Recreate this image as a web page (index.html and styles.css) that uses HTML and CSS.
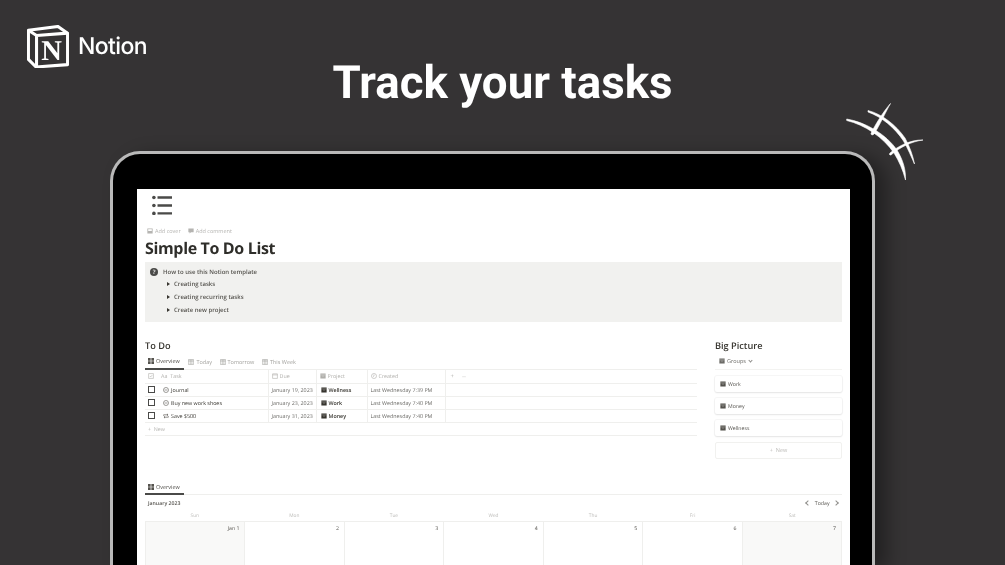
FILE: index.html
```html
<!DOCTYPE html>
<html>
<head>
    <title>Track your tasks</title>
    <link rel="stylesheet" href="styles.css">
</head>
<body>
    <svg class="sprite" width="0" height="0">
        <symbol id="i-grid" viewBox="0 0 10 10"><path d="M0 0h4.400v4.400H0zM5.600 0H10v4.400H5.600zM0 5.600h4.400V10H0zM5.600 5.600H10V10H5.600z" fill="currentColor"/></symbol>
        <symbol id="i-table" viewBox="0 0 10 10"><path d="M.5 1h9v8h-9zM3.700 1v8M6.500 1v8M.5 3.400h9" fill="none" stroke="currentColor"/></symbol>
        <symbol id="i-box" viewBox="0 0 10 10"><path d="M.6.8h8.800v8.400H.6z" fill="currentColor"/><path d="M.6 3.200h8.800M3.500 5.200h3" stroke="#fff" stroke-width=".7" stroke-opacity=".7"/></symbol>
        <symbol id="i-image" viewBox="0 0 10 10"><path d="M.6.8h8.800v8.400H.6z" fill="currentColor"/><path d="M2 2h6v3H2z" fill="#fff"/></symbol>
        <symbol id="i-comment" viewBox="0 0 10 10"><path d="M.6 1h8.800v6H5L2.600 9.200V7H.6z" fill="currentColor"/></symbol>
        <symbol id="i-cal" viewBox="0 0 10 10"><path d="M1 1.400h8v7.600H1zM1 3.200h8" fill="none" stroke="currentColor"/></symbol>
        <symbol id="i-clock" viewBox="0 0 10 10"><circle cx="5" cy="5" r="4.200" fill="none" stroke="currentColor"/><path d="M5 2.600V5L3.400 6.200" fill="none" stroke="currentColor"/></symbol>
        <symbol id="i-minus" viewBox="0 0 10 10"><circle cx="5" cy="5" r="4.200" fill="none" stroke="currentColor" stroke-width=".8"/><path d="M2.600 5h4.800" stroke="currentColor" stroke-width=".8"/></symbol>
        <symbol id="i-repeat" viewBox="0 0 10 10"><path d="M1 4.600V3h7M6.600 1.400 8.400 3 6.600 4.600M9 5.400V7H2M3.400 5.400 1.600 7l1.800 1.600" fill="none" stroke="currentColor" stroke-width=".9"/></symbol>
        <symbol id="i-check" viewBox="0 0 10 10"><path d="M1 1h8v8H1z" fill="none" stroke="currentColor"/><path d="M3 5l1.500 1.500L7 3.600" fill="none" stroke="currentColor"/></symbol>
    </svg>

    <header class="brand">
        <svg class="brand-logo" viewBox="0 0 44 45">
            <path d="M1.500 5.500 32.500 1.500 42.500 8.500V41.500L9.500 44 1.500 36z" fill="#353334" stroke="#fff" stroke-width="3.200" stroke-linejoin="round"/>
            <path d="M1.500 5.500 10 11V44M10 11 42.500 8.500" fill="none" stroke="#fff" stroke-width="3.200" stroke-linejoin="round"/>
            <text class="brand-n" x="25.700" y="36.700" text-anchor="middle">N</text>
        </svg>
        <span class="brand-name">Notion</span>
    </header>

    <svg class="scribble" viewBox="0 0 130 110">
        <path d="M26.700 29C45 32 66 44 77 60c6 10 9 20 8.500 30-2.500-10-6.500-19-11.500-27C63 47 45 35 26.700 30.500z"/>
        <path d="M48 20.500C62 24 76 35 85 48c5 9 8 18 9.500 26-3.500-8-6.500-15-11-23C75 38 62 27 48 22z"/>
        <path d="M70.500 13.500C66 21 60 35 54 44c-1.500 1.500-3 1-3-.5C55 35 63 22 70.500 13.500z"/>
        <path d="M103 50C92 51.500 80 57 71 65c-1.500.5-2-1-1-2C78 56 91 49.500 103 50z"/>
    </svg>

    <h1 class="headline">Track your tasks</h1>

    <div class="tablet">
        <main class="screen">
            <svg class="page-icon" viewBox="0 0 20 20">
                <circle cx="1.900" cy="2.500" r="1.800" fill="#4a4a48"/>
                <circle cx="1.900" cy="10.500" r="1.800" fill="#4a4a48"/>
                <circle cx="1.900" cy="18.400" r="1.800" fill="#4a4a48"/>
                <path d="M5.500 1.300H20v2.400H5.500zM5.500 9.300H20v2.400H5.500zM5.500 17.200H20v2.400H5.500z" fill="#4a4a48"/>
            </svg>
            <div class="page-actions">
                <span class="action"><svg class="ico"><use href="#i-image"/></svg>Add cover</span>
                <span class="action"><svg class="ico"><use href="#i-comment"/></svg>Add comment</span>
            </div>
            <h2 class="page-title">Simple To Do List</h2>

            <section class="callout">
                <div class="callout-head"><span class="help">?</span>How to use this Notion template</div>
                <div class="toggle"><span class="caret"></span>Creating tasks</div>
                <div class="toggle"><span class="caret"></span>Creating recurring tasks</div>
                <div class="toggle"><span class="caret"></span>Create new project</div>
            </section>

            <div class="columns">
                <section class="todo">
                    <h3 class="section-title">To Do</h3>
                    <nav class="tabs">
                        <span class="tab active"><svg class="ico"><use href="#i-grid"/></svg>Overview</span>
                        <span class="tab"><svg class="ico"><use href="#i-table"/></svg>Today</span>
                        <span class="tab"><svg class="ico"><use href="#i-table"/></svg>Tomorrow</span>
                        <span class="tab"><svg class="ico"><use href="#i-table"/></svg>This Week</span>
                    </nav>
                    <table class="tasks">
                        <colgroup>
                            <col class="c-check"><col class="c-task"><col class="c-due"><col class="c-project"><col class="c-created"><col>
                        </colgroup>
                        <tr class="head">
                            <td class="check"><svg class="ico"><use href="#i-check"/></svg></td>
                            <td class="task-name"><span class="aa">Aa</span>Task</td>
                            <td class="line"><svg class="ico"><use href="#i-cal"/></svg>Due</td>
                            <td class="line"><svg class="ico"><use href="#i-box"/></svg>Project</td>
                            <td class="line"><svg class="ico"><use href="#i-clock"/></svg>Created</td>
                            <td class="line add-col"><span>+</span><span>—</span></td>
                        </tr>
                        <tr>
                            <td class="check"><span class="box"></span></td>
                            <td class="task-name"><svg class="ico"><use href="#i-minus"/></svg>Journal</td>
                            <td class="line date">January 19, 2023</td>
                            <td class="line proj"><svg class="ico"><use href="#i-box"/></svg>Wellness</td>
                            <td class="line date">Last Wednesday 7:39 PM</td>
                            <td class="line"></td>
                        </tr>
                        <tr>
                            <td class="check"><span class="box"></span></td>
                            <td class="task-name"><svg class="ico"><use href="#i-minus"/></svg>Buy new work shoes</td>
                            <td class="line date">January 23, 2023</td>
                            <td class="line proj"><svg class="ico"><use href="#i-box"/></svg>Work</td>
                            <td class="line date">Last Wednesday 7:40 PM</td>
                            <td class="line"></td>
                        </tr>
                        <tr>
                            <td class="check"><span class="box"></span></td>
                            <td class="task-name"><svg class="ico"><use href="#i-repeat"/></svg>Save $500</td>
                            <td class="line date">January 31, 2023</td>
                            <td class="line proj"><svg class="ico"><use href="#i-box"/></svg>Money</td>
                            <td class="line date">Last Wednesday 7:40 PM</td>
                            <td class="line"></td>
                        </tr>
                        <tr class="new">
                            <td colspan="6">+&nbsp; New</td>
                        </tr>
                    </table>
                </section>

                <aside class="big-picture">
                    <h3 class="section-title">Big Picture</h3>
                    <div class="groups"><svg class="ico"><use href="#i-box"/></svg>Groups <span class="chev"></span></div>
                    <div class="card"><svg class="ico"><use href="#i-box"/></svg>Work</div>
                    <div class="card"><svg class="ico"><use href="#i-box"/></svg>Money</div>
                    <div class="card"><svg class="ico"><use href="#i-box"/></svg>Wellness</div>
                    <div class="card-new">+&nbsp; New</div>
                </aside>
            </div>

            <section class="calendar">
                <nav class="tabs cal-tabs">
                    <span class="tab active"><svg class="ico"><use href="#i-grid"/></svg>Overview</span>
                </nav>
                <div class="cal-bar">
                    <span class="month">January 2023</span>
                    <span class="cal-nav"><span class="arrow left"></span>Today<span class="arrow right"></span></span>
                </div>
                <div class="cal-days">
                    <span>Sun</span><span>Mon</span><span>Tue</span><span>Wed</span><span>Thu</span><span>Fri</span><span>Sat</span>
                </div>
                <div class="cal-grid">
                    <div class="cell weekend">Jan 1</div>
                    <div class="cell">2</div>
                    <div class="cell">3</div>
                    <div class="cell">4</div>
                    <div class="cell">5</div>
                    <div class="cell">6</div>
                    <div class="cell weekend">7</div>
                </div>
            </section>
        </main>
    </div>
</body>
</html>
```

FILE: styles.css
```css
html, body { margin: 0; height: 100%; overflow: hidden; }
body { background: #353334; font-family: "Open Sans", "Noto Sans", sans-serif; color: #37352f; text-rendering: geometricPrecision; }
.sprite { position: absolute; }

.brand { position: absolute; left: 27px; top: 25px; display: flex; align-items: center; gap: 9px; color: #fff; filter: blur(.3px); }
.brand-logo { width: 42px; height: 43px; }
.brand-n { font-family: "Liberation Serif", serif; font-weight: 700; font-size: 30px; fill: #fff; }
.brand-name { font-family: "Inter", sans-serif; font-size: 23px; font-weight: 500; letter-spacing: -0.6px; margin-top: -1px; }
.scribble { position: absolute; left: 820px; top: 90px; width: 130px; height: 110px; }
.scribble path { fill: #fff; stroke: #fff; stroke-width: .6; }

.headline { margin: 0; padding-top: 57px; height: 95px; text-align: center; color: #fff; font-family: Roboto, sans-serif; font-size: 45.7px; line-height: 54px; font-weight: 700; box-sizing: border-box; filter: blur(.25px); }

.tablet { box-sizing: border-box; margin: 56px 0 0 110px; width: 765px; height: 414px; background: #000; border: 3px solid #b9b9b9; border-bottom: 0; border-radius: 30px 30px 0 0; padding: 35px 22px 0 24px; box-shadow: 12px 4px 18px rgba(0,0,0,.35); }
.screen { background: #fff; height: 376px; padding: 0 8px; overflow: hidden; filter: blur(.35px); }

.ico { width: 6px; height: 6px; margin-right: 2px; vertical-align: -1px; flex: none; }
.page-icon { display: block; width: 20px; height: 20px; margin-left: 7px; padding-top: 6px; }
.page-actions { display: flex; gap: 7px; margin-top: 12px; padding-left: 2px; height: 9px; font-size: 5.5px; line-height: 9px; color: #b5b4b1; }
.page-title { margin: 1px 0 0; font-size: 16px; line-height: 22px; height: 22px; font-weight: 700; letter-spacing: -0.35px; color: #2f2e2a; }

.callout { margin-top: 3px; height: 60px; box-sizing: border-box; padding-top: 5px; background: #f1f1ef; font-size: 6px; font-weight: 600; color: #55534e; }
.callout-head { display: flex; align-items: center; height: 10px; padding-left: 5px; }
.help { width: 8px; height: 8px; border-radius: 50%; background: #4a4a48; color: #fff; font-size: 6px; line-height: 8px; text-align: center; margin-right: 5px; }
.toggle { display: flex; align-items: center; height: 13px; padding-left: 22px; }
.caret { width: 0; height: 0; border-left: 3px solid #37352f; border-top: 2px solid transparent; border-bottom: 2px solid transparent; margin-right: 4px; }

.columns { display: flex; margin-top: 17px; height: 135px; }
.todo { width: 552px; }
.big-picture { width: 127px; margin-left: 18px; }
.section-title { margin: 0; font-size: 9.2px; line-height: 14px; font-weight: 600; color: #37352f; }

.tabs { display: flex; gap: 1.6px; height: 17px; font-size: 5.5px; color: #a3a29e; border-bottom: 1px solid #efefed; box-sizing: border-box; }
.tab { display: flex; align-items: center; padding: 0 3px; height: 17px; box-sizing: border-box; }
.tab.active { color: #55534e; border-bottom: 2px solid #4a4a48; padding-right: 4px; }
.tab .ico { margin-right: 2px; }

.tasks { border-collapse: collapse; table-layout: fixed; width: 100%; font-size: 5.35px; }
.c-check { width: 13px; }
.c-task { width: 110px; }
.c-due { width: 48px; }
.c-project { width: 51px; }
.c-created { width: 78px; }
.tasks td { height: 13px; padding: 0 3px; border-bottom: 1px solid #efefed; box-sizing: border-box; white-space: nowrap; overflow: hidden; color: #6d6c68; }
.tasks .head td { color: #b0afab; }
.tasks .line { border-left: 1px solid #efefed; }
.tasks .check { padding: 0 0 0 3px; }
.tasks .task-name { padding-left: 5px; color: #37352f; font-weight: 500; }
.tasks .head .task-name { padding-left: 3px; font-weight: 400; color: #b0afab; }
.tasks .proj { color: #37352f; font-weight: 600; padding-left: 4px; }
.aa { margin-right: 3px; }
.box { display: block; width: 5px; height: 5px; border: 1px solid #4a4a48; }
.tasks .add-col { font-size: 6px; }
.add-col span { margin-left: 2px; margin-right: 8px; }
.add-col span + span { font-size: 4px; margin-left: 0; }
.tasks .new td { color: #b5b4b1; padding-left: 3px; }

.groups { display: flex; align-items: center; height: 17px; padding-left: 4px; font-size: 5.5px; color: #6d6c68; border-bottom: 1px solid #f3f3f1; box-sizing: border-box; margin-bottom: 6px; }
.chev { width: 2px; height: 2px; border-right: 1px solid #8f8e8a; border-bottom: 1px solid #8f8e8a; transform: rotate(45deg); margin: -1px 0 0 3px; }
.card { display: flex; align-items: center; height: 16px; margin-bottom: 6px; padding-left: 5px; font-size: 5.2px; font-weight: 500; color: #55534e; border-radius: 2px; box-shadow: 0 0 0 1px rgba(15,15,15,.035), 0 1px 2px rgba(15,15,15,.08); }
.card-new { height: 15px; line-height: 15px; text-align: center; font-size: 5.5px; color: #bcbbb8; border: 1px solid #f1f1ef; border-radius: 2px; }

.calendar { margin-top: 7px; }
.cal-tabs { height: 14px; }
.cal-tabs .tab { height: 14px; }
.cal-bar { display: flex; justify-content: space-between; align-items: center; height: 17px; padding: 0 0 2px 3px; box-sizing: border-box; font-size: 5.2px; font-weight: 600; color: #55534e; }
.cal-nav { display: flex; align-items: center; gap: 4.5px; margin-right: 4px; font-weight: 400; }
.arrow { width: 3px; height: 3px; border-left: 1px solid #8f8e8a; border-bottom: 1px solid #8f8e8a; }
.arrow.left { transform: rotate(45deg); }
.arrow.right { transform: rotate(225deg); }
.cal-days { display: grid; grid-template-columns: repeat(7, 1fr); height: 9px; line-height: 8px; font-size: 4.8px; text-align: center; color: #bcbbb8; }
.cal-grid { display: grid; grid-template-columns: repeat(7, 1fr); height: 60px; border-top: 1px solid #efefed; border-left: 1px solid #efefed; }
.cell { border-right: 1px solid #efefed; padding: 2px 5px; text-align: right; font-size: 5.2px; line-height: 9px; color: #55534e; }
.cell.weekend { background: #f9f9f8; }
```
